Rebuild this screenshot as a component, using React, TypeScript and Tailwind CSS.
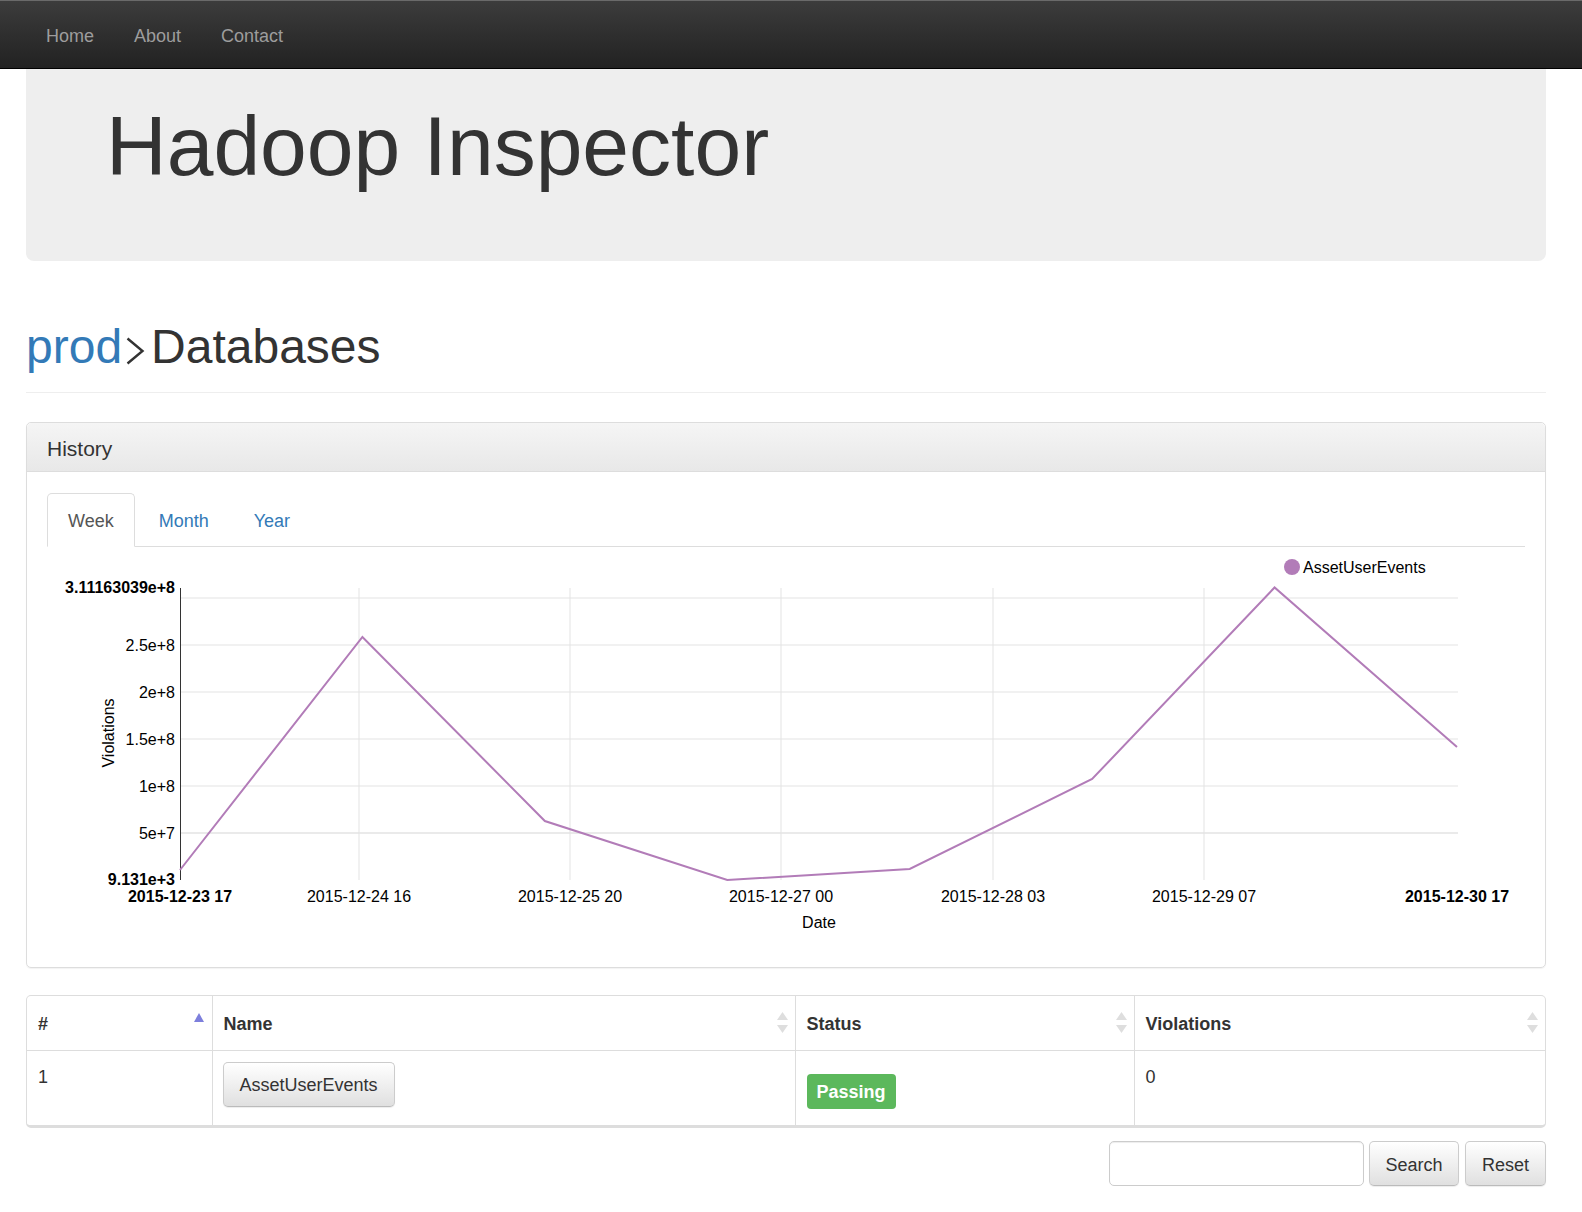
import React from "react";

const violations = [
  870, 637, 821, 880, 869, 779, 587.5, 747,
];

const gridY = [
  { y: 598, label: "" },
  { y: 645, label: "2.5e+8" },
  { y: 692, label: "2e+8" },
  { y: 739, label: "1.5e+8" },
  { y: 786, label: "1e+8" },
  { y: 833, label: "5e+7" },
];

const ticksX = [
  { x: 359, label: "2015-12-24 16" },
  { x: 570, label: "2015-12-25 20" },
  { x: 781, label: "2015-12-27 00" },
  { x: 993, label: "2015-12-28 03" },
  { x: 1204, label: "2015-12-29 07" },
];

function HistoryChart() {
  const step = (1457 - 180) / (violations.length - 1);
  const points = violations.map((y, i) => `${180 + i * step},${y}`).join(" ");

  return (
    <svg
      width={1478}
      height={400}
      viewBox="47 547 1478 400"
      className="block text-[16px]"
    >
      {gridY.map((g) => (
        <line
          key={g.y}
          x1={180}
          x2={1458}
          y1={g.y}
          y2={g.y}
          stroke="#e3e3e3"
          strokeWidth={g.y === 833 ? 1.6 : 1}
        />
      ))}
      {ticksX.map((t) => (
        <line key={t.x} x1={t.x} x2={t.x} y1={588} y2={880} stroke="#e3e3e3" />
      ))}
      <line x1={180.5} x2={180.5} y1={588} y2={880} stroke="#333" />

      <g fill="#000" textAnchor="end">
        <text x={175} y={587} dy="0.35em" fontWeight="bold">
          3.11163039e+8
        </text>
        {gridY
          .filter((g) => g.label)
          .map((g) => (
            <text key={g.label} x={175} y={g.y} dy="0.35em">
              {g.label}
            </text>
          ))}
        <text x={175} y={879} dy="0.35em" fontWeight="bold">
          9.131e+3
        </text>
      </g>

      <g fill="#000" textAnchor="middle">
        <text x={180} y={896} dy="0.35em" fontWeight="bold">
          2015-12-23 17
        </text>
        {ticksX.map((t) => (
          <text key={t.label} x={t.x} y={896} dy="0.35em">
            {t.label}
          </text>
        ))}
        <text x={1457} y={896} dy="0.35em" fontWeight="bold">
          2015-12-30 17
        </text>
        <text x={819} y={922} dy="0.35em">
          Date
        </text>
        <text x={108} y={733} dy="0.35em" transform="rotate(-90 108 733)">
          Violations
        </text>
      </g>

      <polyline points={points} fill="none" stroke="#b27cb8" strokeWidth={2} />

      <circle cx={1292} cy={567} r={8} fill="#b27cb8" />
      <text x={1303} y={567} dy="0.35em" fill="#000">
        AssetUserEvents
      </text>
    </svg>
  );
}

function SortIcon({ active = false }: { active?: boolean }) {
  if (active) {
    return (
      <svg
        width={10}
        height={9}
        viewBox="0 0 10 9"
        className="absolute right-[8px] top-[17px]"
      >
        <path d="M5 0 L10 9 L0 9 Z" fill="#7d7fdc" />
      </svg>
    );
  }
  return (
    <svg
      width={11}
      height={21}
      viewBox="0 0 11 21"
      className="absolute right-[7px] top-[16px]"
    >
      <path d="M5.5 0 L11 8 L0 8 Z" fill="#dedede" />
      <path d="M5.5 21 L11 13 L0 13 Z" fill="#dedede" />
    </svg>
  );
}

const btn =
  "h-[45px] rounded-[5px] border border-[#ccc] border-b-[#bbb] bg-linear-to-b from-white to-[#e0e0e0] pt-[3px] text-[18px] text-[#333] shadow-[inset_0_1px_0_rgba(255,255,255,0.15),0_1px_1px_rgba(0,0,0,0.075)]";

export default function App() {
  return (
    <div className="min-h-[1212px] bg-white font-['Liberation_Sans',Arial,sans-serif] text-[#333]">
      <nav className="h-[69px] border-t border-b border-t-[#6a6a6a] border-b-black bg-linear-to-b from-[#3c3c3c] to-[#222]">
        <div className="flex h-full items-center pl-[26px] pt-[3px] text-[18px] text-[#9d9d9d]">
          <a className="px-[20px]">Home</a>
          <a className="px-[20px]">About</a>
          <a className="px-[20px]">Contact</a>
        </div>
      </nav>

      <div className="pl-[26px] pr-[36px]">
        <div className="h-[192px] rounded-b-[8px] bg-[#eee] pl-[80px] pt-[31px]">
          <h1 className="text-[84px] leading-[92px]">Hadoop Inspector</h1>
        </div>

        <div className="mt-[59px] border-b border-[#eee] pb-[19px]">
          <h1 className="flex items-baseline text-[48px] leading-[53px]">
            <a className="text-[#337ab7]">prod</a>
            <svg
              width={20}
              height={28}
              viewBox="0 0 20 28"
              className="ml-[3px] mr-[6px] self-center translate-y-[4px]"
            >
              <path
                d="M2.5 1.5 L17.5 14 L2.5 26.5"
                fill="none"
                stroke="#333"
                strokeWidth={2.4}
              />
            </svg>
            <span>Databases</span>
          </h1>
        </div>

        <div className="mt-[29px] rounded-[5px] border border-[#ddd] shadow-[0_1px_1px_rgba(0,0,0,0.05)]">
          <div className="flex h-[49px] items-center rounded-t-[5px] border-b border-[#ddd] bg-linear-to-b from-[#f5f5f5] to-[#e8e8e8] pl-[20px] pt-[3px] text-[21px]">
            History
          </div>
          <div className="px-[20px] pb-[20px] pt-[21px]">
            <ul className="flex h-[54px] border-b border-[#ddd] text-[18px]">
              <li className="-mb-px mr-[3px] flex items-center rounded-t-[5px] border border-[#ddd] border-b-white bg-white px-[20px] pt-[3px] text-[#555]">
                Week
              </li>
              <li className="mr-[3px] flex items-center px-[21px] pt-[3px] text-[#337ab7]">
                Month
              </li>
              <li className="flex items-center px-[21px] pt-[3px] text-[#337ab7]">
                Year
              </li>
            </ul>
            <HistoryChart />
          </div>
        </div>

        <div className="mt-[27px] overflow-hidden rounded-[5px] border border-b-[3px] border-[#ddd]">
          <table className="w-full table-fixed border-collapse text-[18px]">
            <colgroup>
              <col className="w-[185px]" />
              <col className="w-[583px]" />
              <col className="w-[339px]" />
              <col />
            </colgroup>
            <thead>
              <tr className="h-[54px] border-b border-[#ddd] text-left">
                <th className="relative px-[11px] pt-[3px] font-bold">
                  #
                  <SortIcon active />
                </th>
                <th className="relative border-l border-[#ddd] px-[11px] pt-[3px] font-bold">
                  Name
                  <SortIcon />
                </th>
                <th className="relative border-l border-[#ddd] px-[11px] pt-[3px] font-bold">
                  Status
                  <SortIcon />
                </th>
                <th className="relative border-l border-[#ddd] px-[11px] pt-[3px] font-bold">
                  Violations
                  <SortIcon />
                </th>
              </tr>
            </thead>
            <tbody>
              <tr className="h-[75px] align-top">
                <td className="px-[11px] pt-[12px] leading-[28px]">1</td>
                <td className="border-l border-[#ddd] px-[10px] pt-[11px]">
                  <button className={`${btn} h-[44px] w-[172px]`}>
                    AssetUserEvents
                  </button>
                </td>
                <td className="border-l border-[#ddd] px-[11px] pt-[11px]">
                  <span className="mt-[12px] inline-block h-[35px] rounded-[4px] bg-[#5cb85c] px-[10px] pt-[1px] font-bold leading-[34px] text-white">
                    Passing
                  </span>
                </td>
                <td className="border-l border-[#ddd] px-[11px] pt-[12px] leading-[28px]">
                  0
                </td>
              </tr>
            </tbody>
          </table>
        </div>

        <div className="mt-[13px] flex justify-end">
          <input
            type="text"
            className="h-[45px] w-[255px] rounded-[5px] border border-[#ccc] px-[12px] text-[18px] shadow-[inset_0_1px_1px_rgba(0,0,0,0.075)]"
          />
          <button className={`${btn} ml-[5px] w-[90px]`}>Search</button>
          <button className={`${btn} ml-[6px] w-[81px]`}>Reset</button>
        </div>
      </div>
    </div>
  );
}
